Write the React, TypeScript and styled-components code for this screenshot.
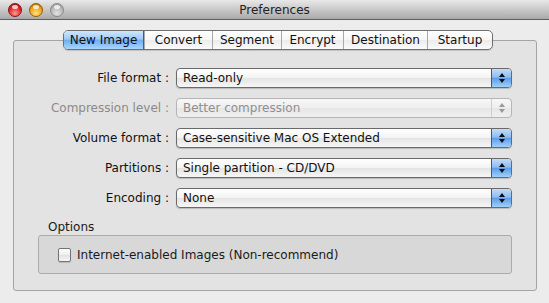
import React, { FC } from "react";
import styled, { createGlobalStyle } from "styled-components";

const Global = createGlobalStyle`
  html, body {
    margin: 0;
    padding: 0;
    background: #ececec;
  }
  body {
    font-family: "DejaVu Sans", "Liberation Sans", sans-serif;
    font-size: 12px;
    color: #1a1a1a;
  }
`;

const Window = styled.div`
  width: 549px;
  height: 303px;
  background: #ececec;
  display: flex;
  flex-direction: column;
  overflow: hidden;
`;

const TitleBar = styled.div`
  height: 19px;
  flex: none;
  display: flex;
  align-items: center;
  position: relative;
  background: linear-gradient(#e8e8e8, #c9c9c9 50%, #a9a9a9);
  border-bottom: 1px solid #5e5e5e;
`;

const Lights = styled.div`
  display: flex;
  gap: 7px;
  padding-left: 8px;
`;

const Light = styled.div<{ $c: string; $d: string; $hl: string }>`
  width: 14px;
  height: 14px;
  border-radius: 50%;
  box-sizing: border-box;
  border: 1px solid ${({ $d }) => $d};
  background: radial-gradient(circle at 50% 78%, ${({ $hl }) => $hl} 0%, ${({ $c }) => $c} 55%, ${({ $d }) => $d} 100%);
  position: relative;
  &::after {
    content: "";
    position: absolute;
    left: 3px;
    top: 1px;
    width: 6px;
    height: 4px;
    border-radius: 50%;
    background: rgba(255, 255, 255, 0.75);
  }
`;

const Title = styled.div`
  position: absolute;
  left: 0;
  right: 0;
  text-align: center;
  font-size: 12px;
  color: #222;
  pointer-events: none;
`;

const Body = styled.div`
  flex: 1;
  padding: 10px 12px 12px 13px;
  display: flex;
  flex-direction: column;
`;

const TabStrip = styled.div`
  display: flex;
  padding-left: 50px;
  margin-bottom: -10px;
  position: relative;
  z-index: 1;
`;

const Tabs = styled.div`
  display: flex;
  height: 20px;
  box-sizing: border-box;
  border: 1px solid #6f6f6f;
  border-radius: 5px;
  overflow: hidden;
  background: linear-gradient(#ffffff, #f6f6f6 50%, #ececec 51%, #fafafa);
  box-shadow: 0 1px 1px rgba(0, 0, 0, 0.15);
`;

const Tab = styled.div<{ $w: number; $active?: boolean }>`
  width: ${({ $w }) => $w}px;
  display: flex;
  align-items: center;
  justify-content: center;
  font-size: 12px;
  color: #111;
  border-left: 1px solid #a9a9a9;
  box-sizing: border-box;
  &:first-child {
    border-left: none;
  }
  ${({ $active }) =>
    $active
      ? `background: linear-gradient(#cfe6fd, #9fcaf7 45%, #71aef2 52%, #a9d5fc);
         border-right: 1px solid #3d5a9a;`
      : ""}
`;

const Box = styled.div`
  flex: 1;
  border: 1px solid #a4a4a4;
  border-radius: 3px;
  background: #e3e3e3;
  padding: 27px 24px 16px 24px;
  display: flex;
  flex-direction: column;
`;

const Form = styled.div`
  display: grid;
  grid-template-columns: 131px 336px;
  column-gap: 7px;
  row-gap: 10px;
`;

const Label = styled.div<{ $disabled?: boolean }>`
  text-align: right;
  line-height: 20px;
  white-space: nowrap;
  color: ${({ $disabled }) => ($disabled ? "#8a8a8a" : "#111")};
`;

const Popup = styled.div<{ $disabled?: boolean }>`
  height: 20px;
  box-sizing: border-box;
  display: flex;
  border: 1px solid ${({ $disabled }) => ($disabled ? "#b5b5b5" : "#6a6a6a")};
  border-radius: 4px;
  overflow: hidden;
  background: ${({ $disabled }) =>
    $disabled
      ? "linear-gradient(#f7f7f7, #eeeeee 50%, #e6e6e6 51%, #f0f0f0)"
      : "linear-gradient(#ffffff, #f3f3f3 50%, #e4e4e4 51%, #f6f6f6)"};
  box-shadow: ${({ $disabled }) => ($disabled ? "none" : "0 1px 1px rgba(0,0,0,0.18)")};
`;

const PopupText = styled.div<{ $disabled?: boolean }>`
  flex: 1;
  padding-left: 6px;
  line-height: 18px;
  white-space: nowrap;
  color: ${({ $disabled }) => ($disabled ? "#8f8f8f" : "#111")};
`;

const Arrows = styled.div<{ $disabled?: boolean }>`
  width: 20px;
  box-sizing: border-box;
  display: flex;
  align-items: center;
  justify-content: center;
  border-left: 1px solid ${({ $disabled }) => ($disabled ? "#cfcfcf" : "#3a55a0")};
  background: ${({ $disabled }) =>
    $disabled
      ? "transparent"
      : "linear-gradient(#c3dcf7, #8fbdf0 45%, #5f9de8 52%, #9fd0fc)"};
`;

const OptionsTitle = styled.div`
  margin: 11px 0 0 10px;
  line-height: 16px;
`;

const OptionsBox = styled.div`
  height: 39px;
  box-sizing: border-box;
  border: 1px solid #ababab;
  border-radius: 3px;
  background: #d8d8d8;
  display: flex;
  align-items: center;
  padding-left: 19px;
  gap: 6px;
`;

const Check = styled.div`
  width: 13px;
  height: 14px;
  box-sizing: border-box;
  border: 1px solid #747474;
  border-radius: 2px;
  background: linear-gradient(#fdfdfd, #eeeeee 50%, #e2e2e2 51%, #f6f6f6);
  box-shadow: 0 1px 1px rgba(0, 0, 0, 0.15);
`;

const Stepper: FC<{ disabled?: boolean }> = ({ disabled }) => {
  const c = disabled ? "#9a9a9a" : "#0d0d0d";
  return (
    <svg width="8" height="12" viewBox="0 0 8 12">
      <path d="M4 1 L7 5 L1 5 Z" fill={c} />
      <path d="M4 11 L7 7 L1 7 Z" fill={c} />
    </svg>
  );
};

const rows = [
  { label: "File format :", value: "Read-only" },
  { label: "Compression level :", value: "Better compression", disabled: true },
  { label: "Volume format :", value: "Case-sensitive Mac OS Extended" },
  { label: "Partitions :", value: "Single partition - CD/DVD" },
  { label: "Encoding :", value: "None" },
];

const tabs = [
  { name: "New Image", w: 80 },
  { name: "Convert", w: 68 },
  { name: "Segment", w: 69 },
  { name: "Encrypt", w: 62 },
  { name: "Destination", w: 84 },
  { name: "Startup", w: 65 },
];

export default function App() {
  return (
    <Window>
      <Global />
      <TitleBar>
        <Lights>
          <Light $c="#e0282c" $d="#8a1215" $hl="#ff9a8a" />
          <Light $c="#f2a51c" $d="#9a5a08" $hl="#ffe27a" />
          <Light $c="#b9b9b9" $d="#8a8a8a" $hl="#e2e2e2" />
        </Lights>
        <Title>Preferences</Title>
      </TitleBar>
      <Body>
        <TabStrip>
          <Tabs>
            {tabs.map((t, i) => (
              <Tab key={t.name} $w={t.w} $active={i === 0}>
                {t.name}
              </Tab>
            ))}
          </Tabs>
        </TabStrip>
        <Box>
          <Form>
            {rows.map((r) => (
              <React.Fragment key={r.label}>
                <Label $disabled={r.disabled}>{r.label}</Label>
                <Popup $disabled={r.disabled}>
                  <PopupText $disabled={r.disabled}>{r.value}</PopupText>
                  <Arrows $disabled={r.disabled}>
                    <Stepper disabled={r.disabled} />
                  </Arrows>
                </Popup>
              </React.Fragment>
            ))}
          </Form>
          <OptionsTitle>Options</OptionsTitle>
          <OptionsBox>
            <Check />
            <span>Internet-enabled Images (Non-recommend)</span>
          </OptionsBox>
        </Box>
      </Body>
    </Window>
  );
}
